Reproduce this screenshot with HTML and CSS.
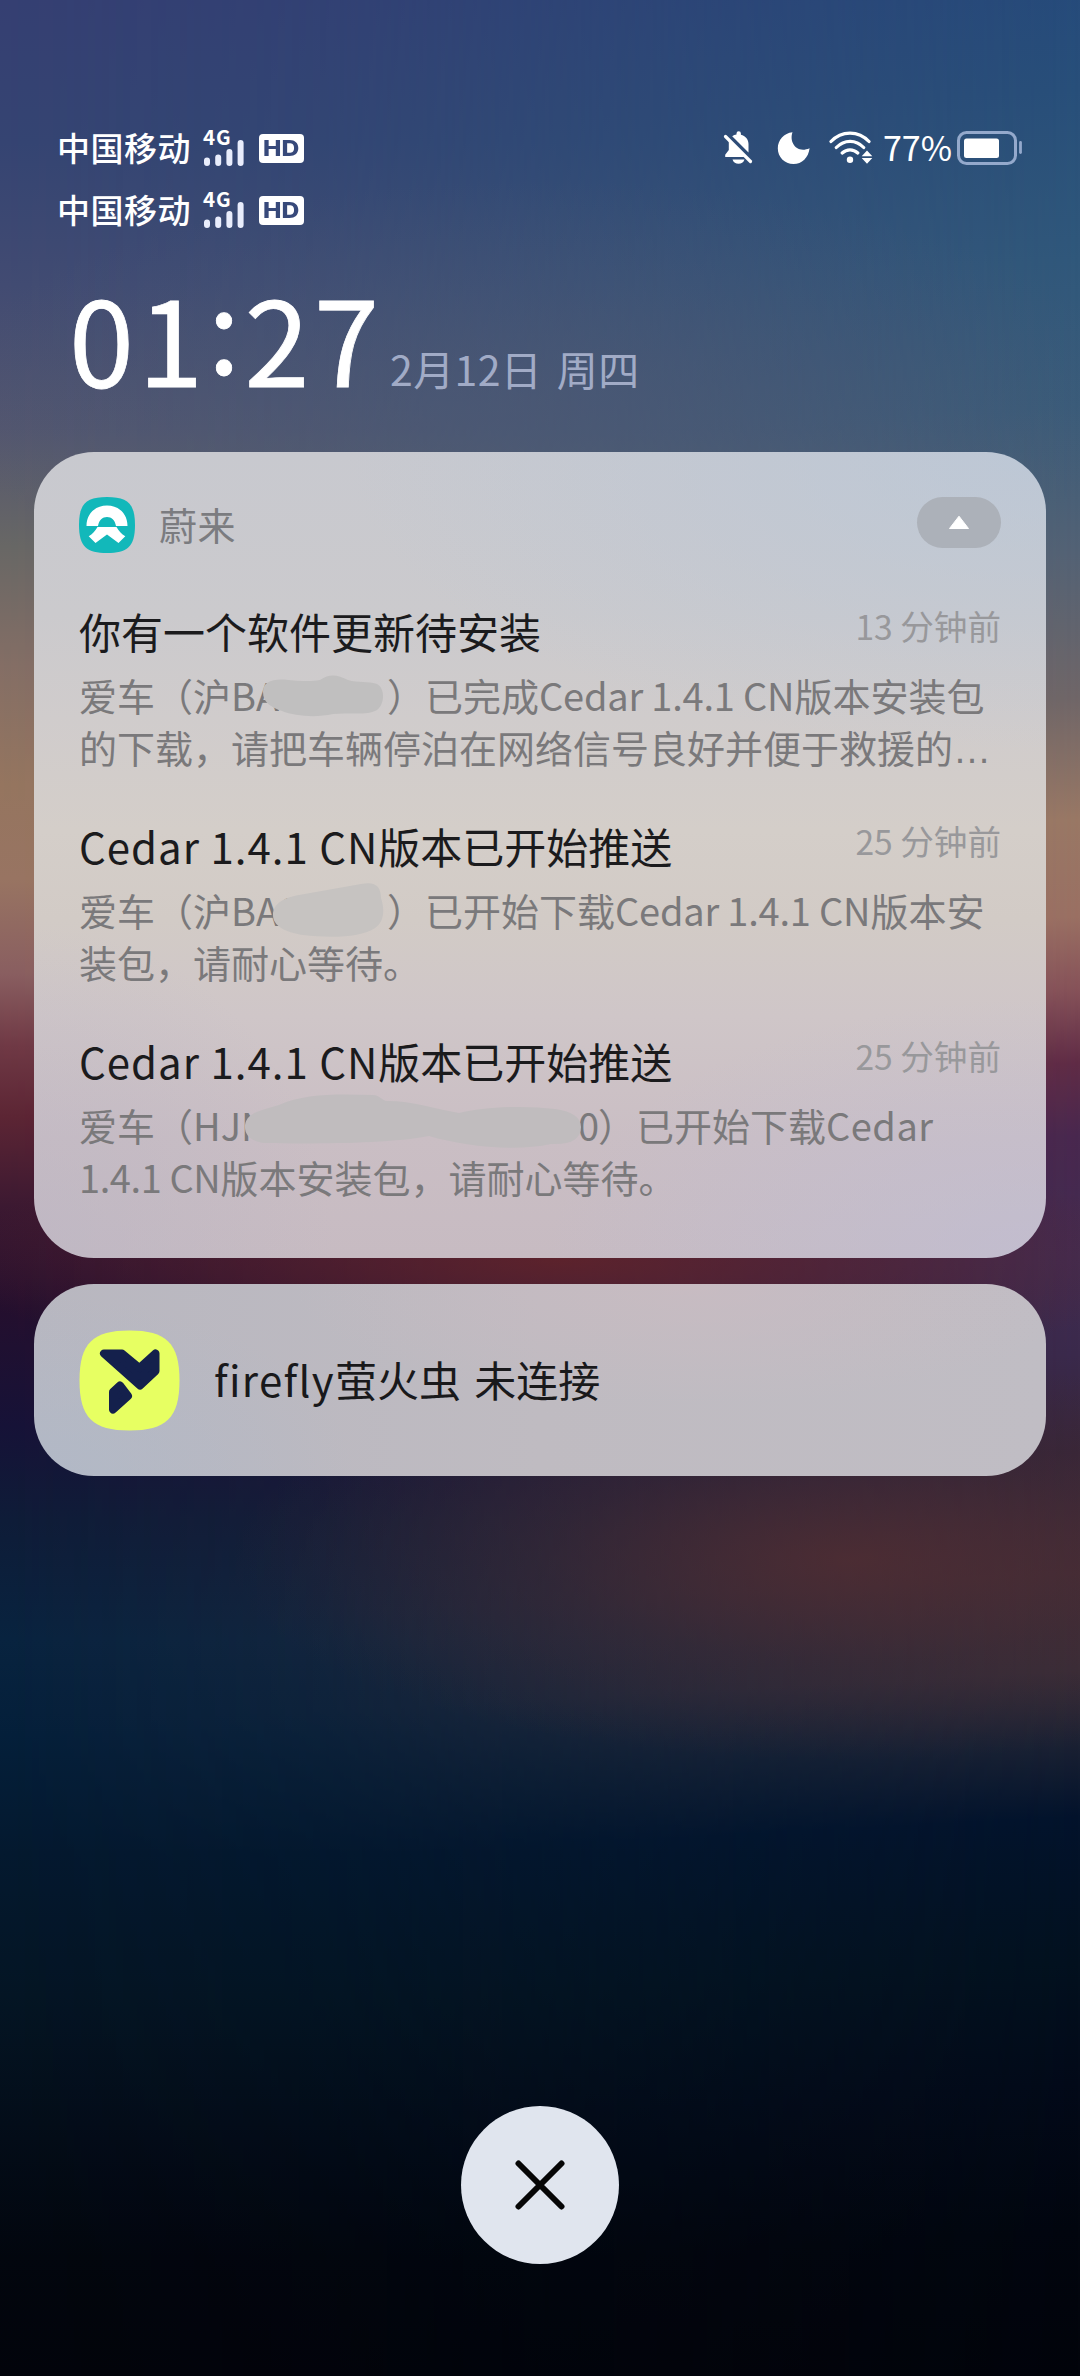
FILE: index.html
```html
<!DOCTYPE html>
<html lang="zh-CN">
<head>
<meta charset="utf-8">
<title>通知中心</title>
<link rel="stylesheet" href="styles.css">
</head>
<body>
<main class="screen">
  <header class="status">
    <div class="carriers">
      <div class="carrier">
        <span class="carrier-name">中国移动</span>
        <span class="signal"><b>4G</b><svg width="42" height="28" viewBox="0 0 42 28"><path d="M4 21.500v2.500M15.200 18.500v5.500M26.400 13v11M37.600 4v20"/></svg></span>
        <span class="hd"><span>HD</span></span>
      </div>
      <div class="carrier">
        <span class="carrier-name">中国移动</span>
        <span class="signal"><b>4G</b><svg width="42" height="28" viewBox="0 0 42 28"><path d="M4 21.500v2.500M15.200 18.500v5.500M26.400 13v11M37.600 4v20"/></svg></span>
        <span class="hd"><span>HD</span></span>
      </div>
    </div>
    <div class="system">
      <svg class="bell" width="32" height="38" viewBox="0 0 32 38" fill="#fff">
        <path d="M13.500 4.500a2.200 2.200 0 0 1 4.400 0v1.200c4.500 1 7.600 4.600 7.600 9.300v8.500L9.200 7.200c1.200-.8 2.700-1.300 4.300-1.600z"/>
        <path d="M5.800 11.500 21.500 28H2.200v-2.200L5.800 21z"/>
        <path d="M9.500 30.500h12c-1 3-3.200 4.300-6 4.300s-5-1.300-6-4.300z"/>
        <path d="M2.500 7.500 27.500 32.500" stroke="#fff" stroke-width="3.200" stroke-linecap="round"/>
      </svg>
      <svg class="moon" width="34" height="34" viewBox="0 0 34 34"><path d="M15.500 1.200C12 10.500 19 23 32.600 17.200 31.500 26.500 25 33 16.500 33 7.500 33 .8 26 .8 17.200.8 9 7 2 15.500 1.200z" fill="#fff"/></svg>
      <svg class="wifi" width="44" height="34" viewBox="0 0 44 34" fill="none" stroke="#fff" stroke-width="3.200" stroke-linecap="round">
        <path d="M2 10.500C12.500-.8 29.500-.8 40 10.500M7.300 16.500c8-8.200 19.600-8.200 27.400 0M13.200 22c4.600-4.300 11-4.300 15.600 0"/>
        <circle cx="21" cy="28.800" r="3.200" fill="#fff" stroke="none"/>
        <path d="M38 19.500l5.300 5.800H32.700zM38 32.800l5.300-5.800H32.700z" fill="#fff" stroke="none"/>
      </svg>
      <span class="percent">77%</span>
      <svg class="battery" width="66" height="34" viewBox="0 0 66 34">
        <rect x="1.500" y="1.500" width="57" height="31" rx="8" fill="none" stroke="#94a9cc" stroke-width="3"/>
        <rect x="7" y="7.500" width="35" height="19.500" rx="2.500" fill="#fff"/>
        <path d="M63.500 11.500v10" stroke="#94a9cc" stroke-width="2.800" stroke-linecap="round"/>
      </svg>
    </div>
  </header>

  <section class="clock">
    <time class="time">01<span class="colon">:</span>27</time>
    <span class="date">2月12日 周四</span>
  </section>

  <section class="card group">
    <div class="app">
      <svg class="nio" width="56" height="56" viewBox="0 0 56 56">
        <path d="M28 0C48 0 56 6 56 28S48 56 28 56 0 50 0 28 8 0 28 0z" fill="#12b8ba"/>
        <path d="M7.500 29C7.500 17 16 8.500 28 8.500S48.500 17 48.500 29H37c-1-6-4.500-9-9-9s-8 3-9 9z" fill="#fff"/>
        <path d="M18.500 30h19c2.200 4 5 7.200 8.800 9.300L39.500 46 28 37.500 16.500 46l-6.800-6.700C13.500 37.200 16.300 34 18.500 30z" fill="#fff"/>
      </svg>
      <span class="app-name">蔚来</span>
      <span class="collapse"><svg width="22" height="15" viewBox="0 0 22 15"><path d="M11 1.200 20.500 13.500h-19z" fill="#fff" stroke="#fff" stroke-linejoin="round"/></svg></span>
    </div>

    <article class="note">
      <div class="note-head"><h2>你有一个软件更新待安装</h2><span class="ago">13 分钟前</span></div>
      <p>爱车（沪<span class="plate">BA<svg class="smudge" width="124" height="44" viewBox="0 0 124 44"><path d="M3 18C3 9 10 5 24 5.500 40 7 50 8 60 6 70-1 78 1 88 6c10 3 20 1 29 4 8 4 8 20 0 26-10 6-30 2-44 4-18 4-38 2-51-3C10 33 3 28 3 18z"/></svg></span>）已完成<span class="run">Cedar 1.4.1 CN</span>版本安装包</p>
      <p>的下载，请把车辆停泊在网络信号良好并便于救援的<span class="dots">…</span></p>
    </article>

    <article class="note">
      <div class="note-head"><h2><span class="latin">Cedar 1.4.1 CN</span>版本已开始推送</h2><span class="ago">25 分钟前</span></div>
      <p>爱车（沪<span class="plate">BA0<svg class="smudge second" width="114" height="56" viewBox="0 0 114 56"><path d="M2 33C2 22 12 16 28 13L90 2c14-3 20 2 20 14 4 12 3 24-6 30-14 10-46 10-72 7C14 50 2 44 2 33z"/></svg></span>）已开始下载<span class="run">Cedar 1.4.1 CN</span>版本安</p>
      <p>装包，请耐心等待。</p>
    </article>

    <article class="note">
      <div class="note-head"><h2><span class="latin">Cedar 1.4.1 CN</span>版本已开始推送</h2><span class="ago">25 分钟前</span></div>
      <p>爱车（<span class="plate vin">HJN<i>0</i><svg class="smudge third" width="344" height="54" viewBox="0 0 344 54"><path d="M2 31C4 18 20 16 36 11 62-1 96 0 130 1c7 0 9 6 14 6 26 0 48 8 72 12 24-6 64-8 96-4 16 2 26 8 26 18 0 12-10 18-30 17-36 8-88 2-122-8-40 8-122 8-164 7C10 48 1 42 2 31z"/></svg></span>）已开始下载<span class="wide">Cedar</span></p>
      <p><span class="tight">1.4.1 CN</span>版本安装包，请耐心等待。</p>
    </article>
  </section>

  <section class="card device">
    <svg class="firefly" width="101" height="101" viewBox="0 0 101 101">
      <path d="M50.500 .5C87 .5 100.500 13 100.500 50.500S87 100.500 50.500 100.500 .5 88 .5 50.500 14 .5 50.500 .5z" fill="#e7ff62"/>
      <g fill="#14204c" stroke="#14204c" stroke-width="8" stroke-linejoin="round">
        <path d="M25 23.500H43L60.500 38 76.500 23.500V41L61 55.500z"/>
        <path d="M41 55.500 49 66 34 79.500V62z"/>
      </g>
    </svg>
    <span class="device-name"><span class="latin">firefly</span>萤火虫 未连接</span>
  </section>

  <button class="close" aria-label="关闭"><svg width="50" height="50" viewBox="0 0 50 50"><path d="M3.500 3.500l43 43M46.500 3.500l-43 43" stroke="#060606" stroke-width="6" stroke-linecap="round"/></svg></button>
</main>
</body>
</html>
```
FILE: styles.css
```css
* { box-sizing: border-box; }
body {
  margin: 0;
  font-family: "Noto Sans CJK SC", "Noto Sans", sans-serif;
  color: #fff;
}
h2, p { margin: 0; font-weight: 400; white-space: nowrap; }

.screen {
  position: relative;
  isolation: isolate;
  width: 1080px;
  height: 2376px;
  overflow: hidden;
  display: flex;
  flex-direction: column;
  background: linear-gradient(177deg,
    #25497b 0%, #284f7a 6%, #30587b 13%, #3a5c7a 19%, #536275 25%, #6f6668 31%,
    #997865 36%, #9a7063 40%, #865259 43%, #602c46 46%, #49284f 49%, #412c51 54%,
    #3b2a4c 58%, #352539 62%, #402c37 67%, #382d38 71%, #1b2133 74%, #03132c 77%,
    #03111f 83%, #030a19 88%, #02060f 94%, #02040b 100%);
}
/* cooler, darker left half of the wallpaper */
.screen::before {
  content: "";
  position: absolute;
  inset: 0;
  z-index: -2;
  background: linear-gradient(180deg,
    #353f72 0%, #354472 6%, #424b72 12%, #53566f 18%, #686765 23%, #846e65 28%,
    #95755f 33%, #987462 37%, #895e60 41%, #6f3945 44%, #5c2534 47%, #3a1831 51%,
    #240f2e 55%, #161237 60%, #0e1c38 64%, #08233f 69%, #041f3a 73%, #04192f 78%,
    #041524 84%, #030c18 90%, #02060e 95%, #02040b 100%);
  -webkit-mask-image: linear-gradient(90deg, #000 0%, rgba(0,0,0,.82) 30%, rgba(0,0,0,.35) 70%, transparent 100%);
  mask-image: linear-gradient(90deg, #000 0%, rgba(0,0,0,.82) 30%, rgba(0,0,0,.35) 70%, transparent 100%);
}
/* warm glow behind the lower cards, blue tint across the top */
.screen::after {
  content: "";
  position: absolute;
  inset: 0;
  z-index: -1;
  background:
    radial-gradient(620px 200px at 850px 1560px, rgba(84,46,50,.75), rgba(70,44,52,.4) 50%, transparent),
    radial-gradient(620px 120px at 560px 1260px, rgba(104,36,38,.75), transparent),
    radial-gradient(600px 220px at 540px 400px, rgba(76,88,116,.6), transparent);
}

.status {
  height: 238px;
  padding: 117px 57px 0 57px;
  display: flex;
  justify-content: space-between;
}
.carrier { height: 62px; display: flex; align-items: center; }
.carrier-name { width: 146px; margin-top: -3px; font-size: 33px; line-height: 62px; letter-spacing: .5px; font-weight: 500; }
.signal { display: flex; flex-direction: column; width: 56px; height: 40px; }
.signal b { font-size: 20.500px; line-height: 16px; height: 11px; font-weight: 600; letter-spacing: 1px; }
.signal svg { flex: none; }
.signal path { fill: none; stroke: #e9edfc; stroke-width: 6px; stroke-linecap: round; }
.hd {
  width: 45px;
  height: 29px;
  border-radius: 4px;
  background: #fff;
  color: #37497a;
  font: 800 22px/29px "Inter", sans-serif;
  text-align: center;
}
.hd span { display: inline-block; transform: scaleX(1.12); }
.system { height: 62px; display: flex; align-items: center; }
.moon { margin-left: 22px; }
.wifi { margin-left: 18px; }
.percent { width: 74px; margin-left: 10px; margin-top: -3px; font-size: 34px; line-height: 62px; }

.clock { height: 214px; padding-left: 69px; display: flex; align-items: baseline; }
.time { width: 321px; font-size: 117px; line-height: 197px; letter-spacing: 4.400px; -webkit-text-stroke: .8px #fff; }
.colon { position: relative; top: -13px; }
.date { position: relative; top: -1px; font-size: 41px; letter-spacing: .4px; word-spacing: 5px; color: #a1abc6; }

.card {
  width: 1012px;
  margin: 0 auto;
  border-radius: 60px;
  padding: 0 45px;
}
.group {
  height: 806px;
  padding-top: 45px;
  background:
    radial-gradient(700px 300px at 100% 0, rgba(185,199,216,.75), transparent),
    radial-gradient(500px 260px at 100% 100%, rgba(190,190,215,.6), transparent),
    radial-gradient(300px 330px at 0 100%, rgba(186,181,196,.6), transparent),
    linear-gradient(#c8c9cf, #cbcacd 20%, #d0cccc 33%, #d4cec9 47%, #d2cbc6 58%, #cfc6c8 70%, #cabec4 85%, #c7bbc2);
}
.app { height: 56px; margin-bottom: 44px; display: flex; align-items: center; color: #7b7c80; }
.app-name { flex: 1; margin: -3px 0 0 24px; font-size: 38px; line-height: 56px; letter-spacing: .4px; }
.collapse {
  width: 84px;
  height: 51px;
  margin-bottom: 5px;
  border-radius: 26px;
  background: #acb1b9;
  display: flex;
  align-items: center;
  justify-content: center;
}
.note { height: 215px; }
.note-head { height: 72px; display: flex; justify-content: space-between; }
h2 { font-size: 42px; line-height: 68px; color: #1b1b1d; }
.ago { font-size: 33.600px; line-height: 57px; color: #98989b; }
p { font-size: 38px; line-height: 52px; height: 52px; color: #7a797b; }
.run { letter-spacing: -.2px; }
.tight { letter-spacing: -.4px; }
.wide { letter-spacing: .5px; }
.dots { font-family: "Liberation Sans", sans-serif; letter-spacing: 0; }
.plate { position: relative; display: inline-block; width: 156px; }
.vin { width: 405px; }
.vin i { position: absolute; right: -1px; font-style: normal; }
.smudge { position: absolute; left: 29px; top: 5px; fill: #c0bfbf; }
.second { left: 40px; top: -2px; fill: #c6c3c1; }
.third { left: 50px; top: -5px; fill: #c0bcbe; }

.device {
  height: 192px;
  margin-top: 26px;
  display: flex;
  align-items: center;
  background:
    radial-gradient(320px 180px at 0 100%, rgba(174,185,201,.7), transparent),
    radial-gradient(400px 120px at 65% 0, rgba(205,187,194,.6), transparent),
    linear-gradient(90deg, #b8b7c0, #bfbbc1 50%, #c0bdc4);
}
.device-name { margin: -4px 0 0 34px; font-size: 42px; word-spacing: 4px; color: #19191b; white-space: nowrap; }
.latin { letter-spacing: 1px; word-spacing: 0; }
.device .latin { letter-spacing: 1.300px; }

.close {
  width: 158px;
  height: 158px;
  margin: 630px auto 0;
  padding: 0;
  border: 0;
  border-radius: 50%;
  background: #e0e5ee;
  display: flex;
  align-items: center;
  justify-content: center;
}
```
